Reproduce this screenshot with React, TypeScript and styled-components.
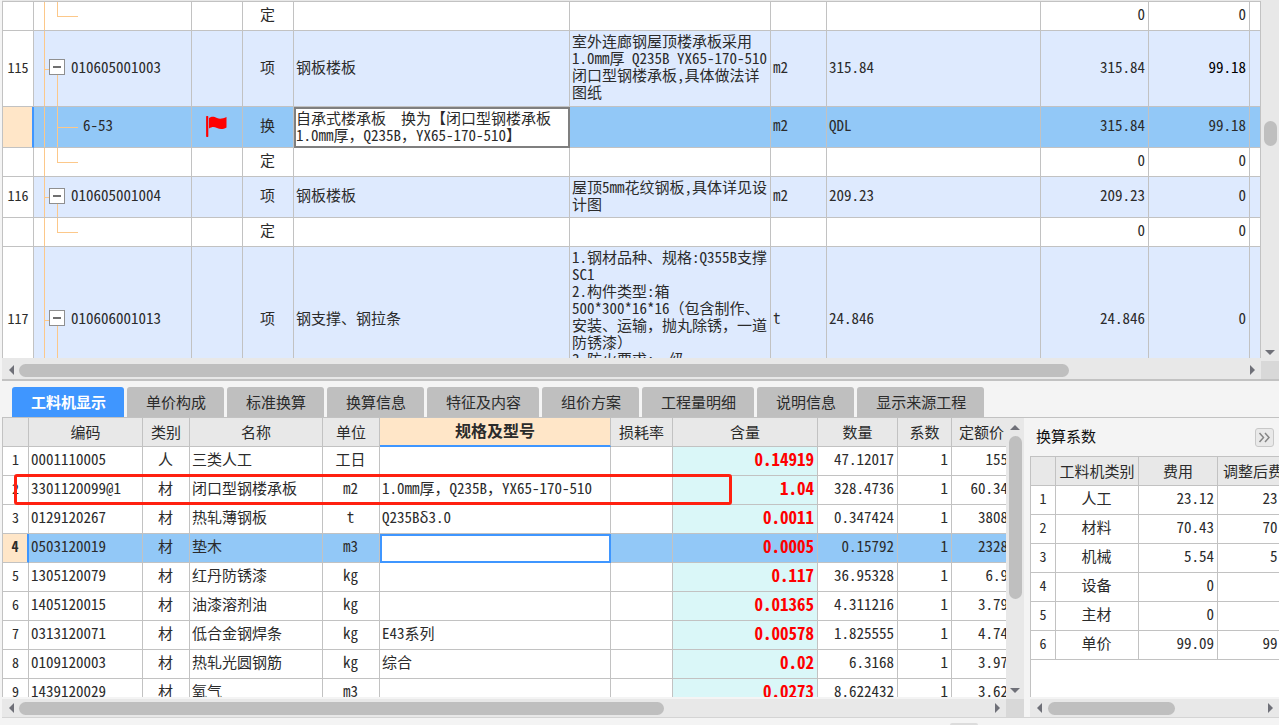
import React from "react";
import styled, { createGlobalStyle, css } from "styled-components";

const c = {
  line: "#c2c2c2",
  track: "#e8e8e8",
  thumb: "#bfbfbf",
  corner: "#d8d8d8",
  head: "#e8e8e8",
  panel: "#f4f4f4",
  item: "#deeafe",
  selected: "#92c8f7",
  peach: "#ffe6c8",
  cyan: "#daf7f8",
  blue: "#3f96ff",
  tree: "#fcc88a",
  text: "#2b2b2b",
};

const GlobalStyle = createGlobalStyle`
  * { box-sizing: border-box; }
  body {
    margin: 0;
    overflow: hidden;
    background: ${c.panel};
    color: ${c.text};
    font: 15px/17px "Noto Sans CJK SC", sans-serif;
  }
  button, input, textarea { font: inherit; color: inherit; }
`;

const Page = styled.main`
  display: flex;
  flex-direction: column;
  height: 100vh;
  padding-left: 2px;
`;

/* ---------- scroll bars ---------- */

const Bar = styled.div<{ $vertical?: boolean }>`
  display: flex;
  flex-direction: ${(p) => (p.$vertical ? "column" : "row")};
  flex: ${(p) => (p.$vertical ? "0 0 auto" : "1 1 0")};
  align-items: center;
  min-width: 0;
  width: ${(p) => (p.$vertical ? "18px" : "auto")};
  height: ${(p) => (p.$vertical ? "auto" : "18px")};
  background: ${c.track};
`;

const ArrowButton = styled.button`
  display: flex;
  flex: none;
  align-items: center;
  justify-content: center;
  width: 17px;
  height: 17px;
  padding: 0;
  border: 0;
  background: none;
`;

const Space = styled.div<{ $grow: number }>`
  flex: ${(p) => p.$grow} 1 0;
`;

const Thumb = styled(Space)<{ $vertical?: boolean }>`
  width: ${(p) => (p.$vertical ? "13px" : "auto")};
  height: ${(p) => (p.$vertical ? "auto" : "13px")};
  border-radius: 7px;
  background: ${c.thumb};
`;

const arrows = {
  left: "M8 0 V10 L3 5 Z",
  right: "M2 0 V10 L7 5 Z",
  up: "M0 8 H10 L5 3 Z",
  down: "M0 2 H10 L5 7 Z",
};

function Arrow({ to }: { to: keyof typeof arrows }) {
  return (
    <ArrowButton type="button" aria-label={`scroll ${to}`}>
      <svg width="10" height="10" viewBox="0 0 10 10">
        <path d={arrows[to]} fill="#6f7078" />
      </svg>
    </ArrowButton>
  );
}

type ScrollProps = { vertical?: boolean; before: number; size: number; after: number; hideStart?: boolean };

function ScrollBar({ vertical, before, size, after, hideStart }: ScrollProps) {
  return (
    <Bar $vertical={vertical}>
      {!hideStart && <Arrow to={vertical ? "up" : "left"} />}
      <Space $grow={before} />
      <Thumb $grow={size} $vertical={vertical} />
      <Space $grow={after} />
      <Arrow to={vertical ? "down" : "right"} />
    </Bar>
  );
}

const ScrollRow = styled.div`
  display: flex;
  flex: none;
`;

const Corner = styled.div`
  width: 18px;
  height: 18px;
  background: ${c.corner};
`;

/* ---------- grid parts ---------- */

const GridArea = styled.div`
  display: flex;
  flex: 1 1 0;
  min-height: 0;
`;

const Viewport = styled.div`
  position: relative;
  flex: 1 1 0;
  min-width: 0;
  margin-bottom: 2px;
  overflow: hidden;
  border-left: 1px solid ${c.line};
  background: #fff;
`;

const Grid = styled.table<{ $fluid?: boolean }>`
  table-layout: fixed;
  width: ${(p) => (p.$fluid ? "100%" : "0")};
  border-collapse: separate;
  border-spacing: 0;
  font-family: "Noto Sans Mono CJK SC", "Noto Sans CJK SC", monospace;
`;

type Align = "left" | "center" | "right";

const Cell = styled.td<{ $align?: Align; $top?: boolean }>`
  padding: ${(p) => (p.$top ? "1px 3px 0 2px" : "0 3px 5px 2px")};
  border-right: 1px solid ${c.line};
  border-bottom: 1px solid ${c.line};
  overflow: hidden;
  text-align: ${(p) => p.$align ?? "left"};
  vertical-align: ${(p) => (p.$top ? "top" : "middle")};
  white-space: pre;
`;

const NumberCell = styled.th<{ $active?: boolean; $bold?: boolean }>`
  padding: 0 0 3px;
  border-right: 1px solid ${c.line};
  border-bottom: 1px solid ${c.line};
  background: #fff;
  font-size: 14px;
  font-weight: ${(p) => (p.$bold ? 700 : 400)};
  text-align: center;
  ${(p) =>
    p.$active &&
    css`
      border-right: 2px solid ${c.blue};
      background: ${c.peach};
    `}
`;

const HeadCell = styled.th<{ $active?: boolean }>`
  height: 29px;
  padding: 0 0 2px;
  border-right: 1px solid ${c.line};
  border-bottom: 1px solid ${c.line};
  background: ${c.head};
  font-weight: 400;
  white-space: nowrap;
  ${(p) =>
    p.$active &&
    css`
      border-bottom: 2px solid ${c.blue};
      background: ${c.peach};
      font-size: 16px;
      font-weight: 700;
    `}
`;

const Row = styled.tr<{ $tone?: "item" | "selected"; $height?: number }>`
  height: ${(p) => p.$height ?? 29}px;
  background: ${(p) => (p.$tone ? c[p.$tone] : "#fff")};
`;

/* ---------- upper bill of quantities ---------- */

const Upper = styled.section`
  display: flex;
  flex: 380 1 0;
  flex-direction: column;
  min-height: 0;
  padding-top: 1px;
  border-bottom: 2px solid ${c.line};
  background: ${c.track};
`;

const UpperView = styled(Viewport)`
  margin-bottom: 3px;
  border-top: 1px solid ${c.line};
`;

type Branch = "item" | "middle" | "last";

/* The trunk is the cell's background; each branch is drawn over it. */
const branches = {
  item: css`
    padding-left: 15px;
    &::before { top: 50%; bottom: 0; }
    &::after { left: 10px; width: 5px; }
  `,
  middle: css`
    padding-left: 49px;
    &::before { top: 0; bottom: 0; }
    &::after { left: 23px; width: 21px; }
  `,
  last: css`
    padding-left: 49px;
    &::before { top: 0; bottom: 50%; }
    &::after { left: 23px; width: 21px; }
  `,
};

const TreeCell = styled(Cell)<{ $branch: Branch }>`
  position: relative;
  background: linear-gradient(${c.tree}, ${c.tree}) 10px 0 / 1px 100% no-repeat;
  &::before {
    content: "";
    position: absolute;
    left: 23px;
    border-left: 1px solid ${c.tree};
  }
  &::after {
    content: "";
    position: absolute;
    top: 50%;
    border-top: 1px solid ${c.tree};
  }
  ${(p) => branches[p.$branch]}
`;

const TreeContent = styled.div`
  position: relative;
  z-index: 1;
  display: flex;
  align-items: center;
  gap: 6px;
`;

const Toggle = styled.button`
  display: flex;
  align-items: center;
  justify-content: center;
  width: 16px;
  height: 16px;
  margin-top: 2px;
  padding: 0;
  border: 1px solid #8f8f8f;
  background: #fff;
`;

const EditingCell = styled(Cell)`
  padding: 0;
  border: 2px solid #7f7f7f;
  background: #fff;
`;

const CellTextArea = styled.textarea`
  display: block;
  width: 100%;
  height: 37px;
  padding: 0;
  border: 0;
  outline: 0;
  resize: none;
  overflow: hidden;
  background: #fff;
  white-space: pre;
`;

const StrongNumber = styled.span`
  color: #000;
`;

type Bill = {
  no?: string;
  branch: Branch;
  code?: string;
  kind: string;
  name?: string;
  spec?: string;
  unit?: string;
  expr?: string;
  qty: string;
  price: string;
  height: number;
  selected?: boolean;
};

const bills: Bill[] = [
  { branch: "last", kind: "定", qty: "0", price: "0", height: 29 },
  {
    no: "115", branch: "item", code: "010605001003", kind: "项", name: "钢板楼板",
    spec: "室外连廊钢屋顶楼承板采用\n1.0mm厚 Q235B YX65-170-510\n闭口型钢楼承板,具体做法详\n图纸",
    unit: "m2", expr: "315.84", qty: "315.84", price: "99.18", height: 76,
  },
  {
    branch: "middle", code: "6-53", kind: "换",
    name: "自承式楼承板　换为【闭口型钢楼承板\n1.0mm厚，Q235B，YX65-170-510】",
    unit: "m2", expr: "QDL", qty: "315.84", price: "99.18", height: 41, selected: true,
  },
  { branch: "last", kind: "定", qty: "0", price: "0", height: 29 },
  {
    no: "116", branch: "item", code: "010605001004", kind: "项", name: "钢板楼板",
    spec: "屋顶5mm花纹钢板,具体详见设\n计图", unit: "m2", expr: "209.23", qty: "209.23", price: "0", height: 41,
  },
  { branch: "last", kind: "定", qty: "0", price: "0", height: 29 },
  {
    no: "117", branch: "item", code: "010606001013", kind: "项", name: "钢支撑、钢拉条",
    spec: "1.钢材品种、规格:Q355B支撑\nSC1\n2.构件类型:箱\n500*300*16*16（包含制作、\n安装、运输，抛丸除锈，一道\n防锈漆）\n3.防火要求:一级",
    unit: "t", expr: "24.846", qty: "24.846", price: "0", height: 146,
  },
];

const FlagIcon = styled.svg`
  display: block;
  margin: 3px auto 0;
`;

function Flag() {
  return (
    <FlagIcon width="21" height="21" viewBox="0 0 21 21">
      <path d="M1.2 1 V20" stroke="#f00" strokeWidth="2.2" strokeLinecap="round" />
      <path d="M3 2 C6 0 8 0.5 11 2 C14 3.3 17 2.5 20.5 1 V11.5 C17 13.5 14 13.5 11 12 C8 10.5 6 10.5 3 12.5 Z" fill="#f00" />
    </FlagIcon>
  );
}

function BillTable() {
  return (
    <Grid $fluid aria-label="清单">
      <colgroup>
        {[31, 158, 51, 51, 276, 201, 56, 214, 108, 101].map((w, i) => (
          <col key={i} width={w} />
        ))}
        <col />
      </colgroup>
      <tbody>
        {bills.map((b, i) => (
          <Row key={i} $height={b.height} $tone={b.selected ? "selected" : b.no ? "item" : undefined}>
            <NumberCell scope="row" $active={b.selected}>{b.no}</NumberCell>
            <TreeCell $branch={b.branch}>
              <TreeContent>
                {b.no && (
                  <Toggle type="button" aria-label="折叠">
                    <svg width="10" height="10" viewBox="0 0 10 10">
                      <path d="M1 5 H9" stroke="#333" strokeWidth="1.4" />
                    </svg>
                  </Toggle>
                )}
                {b.code}
              </TreeContent>
            </TreeCell>
            <Cell>{b.selected && <Flag />}</Cell>
            <Cell $align="center">{b.kind}</Cell>
            {b.selected ? (
              <EditingCell>
                <CellTextArea aria-label="名称" rows={2} defaultValue={b.name} spellCheck={false} />
              </EditingCell>
            ) : (
              <Cell>{b.name}</Cell>
            )}
            <Cell $top={b.height > 100}>{b.spec}</Cell>
            <Cell>{b.unit}</Cell>
            <Cell>{b.expr}</Cell>
            <Cell $align="right">{b.qty}</Cell>
            <Cell $align="right">{b.no === "115" ? <StrongNumber>{b.price}</StrongNumber> : b.price}</Cell>
            <Cell />
          </Row>
        ))}
      </tbody>
    </Grid>
  );
}

/* ---------- lower detail pane ---------- */

const Lower = styled.section`
  display: flex;
  flex: 345 1 0;
  flex-direction: column;
  min-height: 0;
`;

const Tabs = styled.div`
  display: flex;
  flex: none;
  gap: 3px;
  height: 37px;
  padding: 6px 0 0 10px;
  border-bottom: 1px solid ${c.line};
`;

const Tab = styled.button<{ $active?: boolean }>`
  height: 30px;
  padding: 0 18px 2px 19px;
  border: 0;
  border-radius: 3px 3px 0 0;
  background: ${(p) => (p.$active ? c.blue : "#bfbfbf")};
  color: ${(p) => (p.$active ? "#fff" : c.text)};
  font-weight: ${(p) => (p.$active ? 700 : 400)};
  white-space: nowrap;
`;

const Split = styled.div`
  display: flex;
  flex: 1 1 0;
  gap: 6px;
  min-height: 0;
`;

const Pane = styled.div<{ $grow: number }>`
  display: flex;
  flex: ${(p) => p.$grow} 1 0;
  flex-direction: column;
  min-width: 0;
`;

const Amount = styled(Cell)<{ $selected?: boolean }>`
  background: ${(p) => (p.$selected ? "transparent" : c.cyan)};
  color: #f00;
  font-size: 17px;
  font-weight: 700;
`;

const ActiveCell = styled(Cell)`
  padding: 0;
  border: 2px solid ${c.blue};
  background: #fff;
`;

const CellInput = styled.input`
  display: block;
  width: 100%;
  height: 25px;
  padding: 0 2px;
  border: 0;
  outline: 0;
  background: #fff;
`;

const RedMark = styled.div`
  position: absolute;
  top: 56px;
  left: 11px;
  width: 718px;
  height: 31px;
  border: 3px solid #ff2010;
  border-radius: 3px;
  pointer-events: none;
`;

const SideHead = styled.div`
  display: flex;
  flex: none;
  align-items: center;
  justify-content: space-between;
  height: 38px;
  padding: 0 5px 0 6px;
  color: #111;
`;

const SideTitle = styled.h2`
  margin: 0;
  padding-bottom: 3px;
  font-size: 15px;
  font-weight: 400;
`;

const ExpandButton = styled.button`
  display: flex;
  align-items: center;
  justify-content: center;
  width: 19px;
  height: 19px;
  padding: 0;
  border: 1px solid #c8c8c8;
  border-radius: 3px;
  background: #e9e9e9;
`;

const SideView = styled(Viewport)`
  border-top: 1px solid ${c.line};
`;

const Footer = styled.footer`
  display: flex;
  flex: none;
  align-items: flex-end;
  height: 8px;
  padding-left: 948px;
  border-top: 1px solid #d4d4d4;
`;

const FooterHandle = styled.div`
  width: 28px;
  height: 2px;
  border-radius: 3px 3px 0 0;
  background: #dcdcdc;
`;

const tabs = ["工料机显示", "单价构成", "标准换算", "换算信息", "特征及内容", "组价方案", "工程量明细", "说明信息", "显示来源工程"];

const resourceHeads = ["", "编码", "类别", "名称", "单位", "规格及型号", "损耗率", "含量", "数量", "系数", "定额价"];

const resources = [
  ["0001110005", "人", "三类人工", "工日", "", "0.14919", "47.12017", "155"],
  ["3301120099@1", "材", "闭口型钢楼承板", "m2", "1.0mm厚，Q235B，YX65-170-510", "1.04", "328.4736", "60.34"],
  ["0129120267", "材", "热轧薄钢板", "t", "Q235Bδ3.0", "0.0011", "0.347424", "3808"],
  ["0503120019", "材", "垫木", "m3", "", "0.0005", "0.15792", "2328"],
  ["1305120079", "材", "红丹防锈漆", "kg", "", "0.117", "36.95328", "6.9"],
  ["1405120015", "材", "油漆溶剂油", "kg", "", "0.01365", "4.311216", "3.79"],
  ["0313120071", "材", "低合金钢焊条", "kg", "E43系列", "0.00578", "1.825555", "4.74"],
  ["0109120003", "材", "热轧光圆钢筋", "kg", "综合", "0.02", "6.3168", "3.97"],
  ["1439120029", "材", "氧气", "m3", "", "0.0273", "8.622432", "3.62"],
];

function ResourceTable() {
  return (
    <Grid aria-label="工料机显示">
      <colgroup>
        {[26, 114, 47, 133, 57, 231, 62, 145, 80, 54, 60].map((w, i) => (
          <col key={i} width={w} />
        ))}
      </colgroup>
      <thead>
        <tr>
          {resourceHeads.map((h, i) => (
            <HeadCell key={i} scope="col" $active={i === 5}>{h}</HeadCell>
          ))}
        </tr>
      </thead>
      <tbody>
        {resources.map(([code, kind, name, unit, spec, amount, qty, price], i) => {
          const selected = i === 3;
          return (
            <Row key={code} $tone={selected ? "selected" : undefined}>
              <NumberCell scope="row" $active={selected} $bold={selected}>{i + 1}</NumberCell>
              <Cell>{code}</Cell>
              <Cell $align="center">{kind}</Cell>
              <Cell>{name}</Cell>
              <Cell $align="center">{unit}</Cell>
              {selected ? (
                <ActiveCell>
                  <CellInput aria-label="规格及型号" />
                </ActiveCell>
              ) : (
                <Cell>{spec}</Cell>
              )}
              <Cell />
              <Amount $align="right" $selected={selected}>{amount}</Amount>
              <Cell $align="right">{qty}</Cell>
              <Cell $align="right">1</Cell>
              <Cell $align="right">{price}</Cell>
            </Row>
          );
        })}
      </tbody>
    </Grid>
  );
}

const factors = [
  ["人工", "23.12"],
  ["材料", "70.43"],
  ["机械", "5.54"],
  ["设备", "0"],
  ["主材", "0"],
  ["单价", "99.09"],
];

function FactorTable() {
  return (
    <Grid aria-label="换算系数">
      <colgroup>
        {[25, 83, 79, 86].map((w, i) => (
          <col key={i} width={w} />
        ))}
      </colgroup>
      <thead>
        <tr>
          {["", "工料机类别", "费用", "调整后费用"].map((h, i) => (
            <HeadCell key={i} scope="col">{h}</HeadCell>
          ))}
        </tr>
      </thead>
      <tbody>
        {factors.map(([name, fee], i) => (
          <Row key={name}>
            <NumberCell scope="row">{i + 1}</NumberCell>
            <Cell $align="center">{name}</Cell>
            <Cell $align="right">{fee}</Cell>
            <Cell $align="right">{fee}</Cell>
          </Row>
        ))}
      </tbody>
    </Grid>
  );
}

export default function App() {
  return (
    <Page>
      <GlobalStyle />
      <Upper>
        <GridArea>
          <UpperView>
            <BillTable />
          </UpperView>
          <ScrollBar vertical hideStart before={120} size={25} after={198} />
        </GridArea>
        <ScrollRow>
          <ScrollBar before={0} size={1050} after={175} />
          <Corner />
        </ScrollRow>
      </Upper>
      <Lower>
        <Tabs role="tablist">
          {tabs.map((t, i) => (
            <Tab key={t} type="button" role="tab" aria-selected={i === 0} $active={i === 0}>{t}</Tab>
          ))}
        </Tabs>
        <Split>
          <Pane $grow={1022}>
            <GridArea>
              <Viewport>
                <ResourceTable />
                <RedMark />
              </Viewport>
              <ScrollBar vertical before={1} size={163} after={83} />
            </GridArea>
            <ScrollRow>
              <ScrollBar before={0} size={646} after={325} />
              <Corner />
            </ScrollRow>
          </Pane>
          <Pane $grow={249}>
            <SideHead>
              <SideTitle>换算系数</SideTitle>
              <ExpandButton type="button" aria-label="展开">
                <svg width="13" height="11" viewBox="0 0 13 11" fill="none" stroke="#858585" strokeWidth="1.5">
                  <path d="M1.5 1 L5.5 5.5 L1.5 10 M7 1 L11 5.5 L7 10" />
                </svg>
              </ExpandButton>
            </SideHead>
            <GridArea>
              <SideView>
                <FactorTable />
              </SideView>
            </GridArea>
            <ScrollRow>
              <ScrollBar before={1} size={127} after={87} />
            </ScrollRow>
          </Pane>
        </Split>
        <Footer>
          <FooterHandle />
        </Footer>
      </Lower>
    </Page>
  );
}
